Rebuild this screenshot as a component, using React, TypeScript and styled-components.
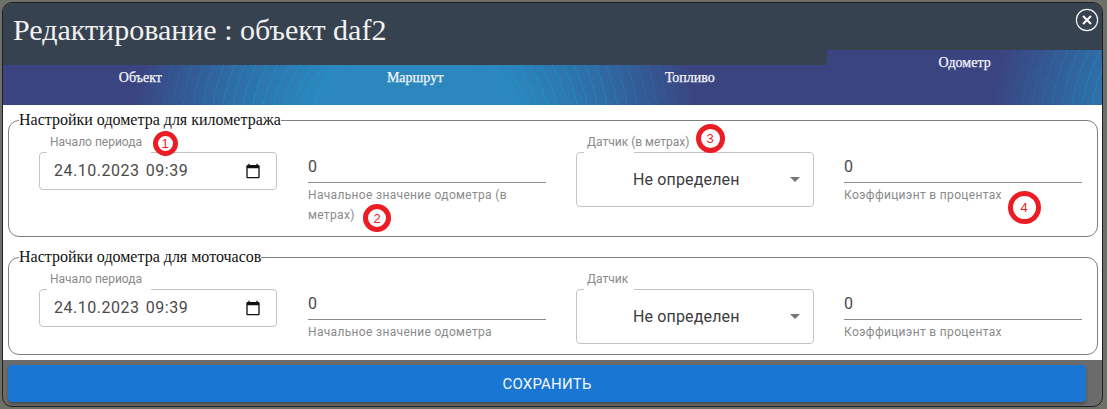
import React from "react";
import styled, { createGlobalStyle } from "styled-components";

const Global = createGlobalStyle`
  html, body { margin: 0; padding: 0; background: #6e6f68; }
  #root { width: 1107px; height: 409px; overflow: hidden; }
`;

const Page = styled.div`
  width: 1107px;
  height: 409px;
  box-sizing: border-box;
  padding: 2px 4px 2px 2px;
`;

const Modal = styled.div`
  position: relative;
  height: 405px;
  box-sizing: border-box;
  border: 1px solid #1f1f1f;
  border-radius: 10px;
  overflow: hidden;
  display: flex;
  flex-direction: column;
  background: #6b6b6b;
`;

const Header = styled.header`
  height: 62px;
  flex: none;
  box-sizing: border-box;
  background: #36424f;
  display: flex;
  justify-content: space-between;
  align-items: flex-start;
  padding: 5px 3px 0 10px;
`;

const Title = styled.h1`
  margin: 1px 0 0;
  font: 400 30px/42px "Liberation Serif", serif;
  color: #f1f1f1;
`;

const Close = styled.button`
  width: 24px;
  height: 24px;
  padding: 0;
  border: 0;
  background: none;
  display: block;
`;

const TabStrip = styled.nav`
  height: 40px;
  flex: none;
  display: flex;
  align-items: flex-end;
`;

const Glow = styled.div<{ $cx: number; $cy: number; $fade: number }>`
  position: relative;
  overflow: hidden;
  background: radial-gradient(
    circle at ${(p) => p.$cx}px ${(p) => p.$cy}px,
    #2b87bd 0,
    #2b87bd 110px,
    #2f6da6 190px,
    #3a4480 ${(p) => p.$fade}px
  );
  &::before {
    content: "";
    position: absolute;
    inset: 0;
    background: repeating-radial-gradient(
      circle at ${(p) => p.$cx}px ${(p) => p.$cy}px,
      transparent 0,
      transparent 8.6px,
      rgba(14, 158, 222, 0.75) 9.2px,
      transparent 9.8px
    );
    -webkit-mask-image: radial-gradient(
      circle at ${(p) => p.$cx}px ${(p) => p.$cy}px,
      transparent 95px,
      #000 105px,
      #000 170px,
      transparent ${(p) => p.$fade}px
    );
    mask-image: radial-gradient(
      circle at ${(p) => p.$cx}px ${(p) => p.$cy}px,
      transparent 95px,
      #000 105px,
      #000 170px,
      transparent ${(p) => p.$fade}px
    );
  }
`;

const IdleTabs = styled(Glow)`
  flex: 3;
  height: 40px;
  display: flex;
`;

const ActiveTab = styled(Glow)`
  flex: 1;
  height: 55px;
`;

const TabLabel = styled.div`
  position: relative;
  flex: 1;
  height: 100%;
  box-sizing: border-box;
  padding-top: 4px;
  text-align: center;
  font: 400 14px/17px "Liberation Serif", serif;
  color: #f4f6fa;
  -webkit-text-stroke: 0.25px #f4f6fa;
`;

const Body = styled.main`
  height: 255px;
  flex: none;
  box-sizing: border-box;
  background: #fff;
  padding: 6px 4px 0 5px;
  display: flex;
  flex-direction: column;
  gap: 11px;
`;

const Section = styled.fieldset`
  margin: 0;
  padding: 0;
  min-width: 0;
  border: 1px solid #808080;
  border-radius: 11px;
`;

const Legend = styled.legend`
  margin-left: 10px;
  padding: 0;
  font: 400 16px/18px "Liberation Serif", serif;
  color: #111;
`;

const Row = styled.div`
  display: grid;
  grid-template-columns: 269px 268px 268px 238px;
  align-items: start;
  padding: 23px 15px 10px 30px;
  & > * {
    width: 238px;
  }
`;

const Outlined = styled.div<{ $tall?: boolean }>`
  position: relative;
  height: ${(p) => (p.$tall ? 55 : 38)}px;
  box-sizing: border-box;
  border: 1px solid #c4c4c4;
  border-radius: 4px;
  display: flex;
  align-items: center;
  font: 400 16px/20px Roboto, sans-serif;
  color: #454545;
`;

const Notch = styled.span<{ $w: number }>`
  position: absolute;
  top: -1px;
  left: 7px;
  width: ${(p) => p.$w}px;
  height: 1px;
  background: #fff;
`;

const FloatLabel = styled.label`
  position: absolute;
  top: -18px;
  left: 10px;
  white-space: nowrap;
  font: 400 12px/14px Roboto, sans-serif;
  color: #8a8a8a;
`;

const DateText = styled.span`
  margin-left: 14px;
  flex: 1;
  letter-spacing: 0.5px;
  word-spacing: 2px;
  color: #4a4a4a;
`;

const CalendarIcon = styled.svg`
  width: 16px;
  height: 16px;
  margin-right: 15px;
  fill: #111;
`;

const SelectText = styled.span`
  flex: 1;
  padding-left: 56px;
  letter-spacing: 0.15px;
  color: #3c3c3c;
`;

const Arrow = styled.span`
  width: 0;
  height: 0;
  margin-right: 13px;
  border-left: 5px solid transparent;
  border-right: 5px solid transparent;
  border-top: 5px solid #757575;
`;

const TextField = styled.div`
  padding: 5px 0 1px;
`;

const Value = styled.div`
  height: 26px;
  box-sizing: border-box;
  border-bottom: 1px solid #8c8c8c;
  font: 400 16px/20px Roboto, sans-serif;
  color: #4a4a4a;
`;

const Helper = styled.div`
  margin-top: 2px;
  font: 400 12px/20px Roboto, sans-serif;
  letter-spacing: 0.33px;
  color: #8a8a8a;
`;

const Footer = styled.footer`
  flex: 1;
  box-sizing: border-box;
  padding: 5px 16px 5px 5px;
  display: flex;
`;

const Save = styled.button`
  flex: 1;
  height: 37px;
  border: 0;
  border-radius: 4px;
  background: #1976d2;
  box-shadow: 0 2px 3px rgba(0, 0, 0, 0.3);
  color: #f4f8fc;
  font: 400 15px/20px Roboto, sans-serif;
  letter-spacing: 0.2px;
  text-transform: uppercase;
`;

const Marker = styled.span<{ $x: number; $y: number; $d: number }>`
  position: absolute;
  left: ${(p) => p.$x - p.$d / 2}px;
  top: ${(p) => p.$y - p.$d / 2}px;
  width: ${(p) => p.$d}px;
  height: ${(p) => p.$d}px;
  box-sizing: border-box;
  border: 5px solid #ec1c24;
  border-radius: 50%;
  background: #fff;
  display: flex;
  align-items: center;
  justify-content: center;
  font: 400 13px/13px "Liberation Sans", sans-serif;
  color: #ed1c24;
`;

const DateField = () => (
  <Outlined>
    <Notch $w={104} />
    <FloatLabel>Начало периода</FloatLabel>
    <DateText>24.10.2023 09:39</DateText>
    <CalendarIcon viewBox="0 0 24 24">
      <path d="M20 3h-1V1h-2v2H7V1H5v2H4c-1.1 0-2 .9-2 2v16c0 1.1.9 2 2 2h16c1.1 0 2-.9 2-2V5c0-1.1-.9-2-2-2zm0 18H4V8h16v13z" />
    </CalendarIcon>
  </Outlined>
);

const SelectField = ({ label }: { label: string }) => (
  <Outlined $tall>
    <Notch $w={50} />
    <FloatLabel>{label}</FloatLabel>
    <SelectText>Не определен</SelectText>
    <Arrow />
  </Outlined>
);

const Input = ({ helper }: { helper: string }) => (
  <TextField>
    <Value>0</Value>
    <Helper>{helper}</Helper>
  </TextField>
);

export default function App() {
  return (
    <Page>
      <Global />
      <Modal>
        <Header>
          <Title>Редактирование : объект daf2</Title>
          <Close aria-label="Закрыть">
            <svg width="24" height="24" viewBox="0 0 24 24" fill="none" stroke="#f4f4f4">
              <circle cx="12" cy="12" r="10.6" strokeWidth="1.2" />
              <path d="M8 8l8 8M16 8l-8 8" strokeWidth="2.2" />
            </svg>
          </Close>
        </Header>
        <TabStrip>
          <IdleTabs $cx={412} $cy={75} $fade={285}>
            <TabLabel>Объект</TabLabel>
            <TabLabel>Маршрут</TabLabel>
            <TabLabel>Топливо</TabLabel>
          </IdleTabs>
          <ActiveTab $cx={447} $cy={90} $fade={285}>
            <TabLabel>Одометр</TabLabel>
          </ActiveTab>
        </TabStrip>
        <Body>
          <Section>
            <Legend>Настройки одометра для километража</Legend>
            <Row>
              <DateField />
              <Input helper="Начальное значение одометра (в метрах)" />
              <SelectField label="Датчик (в метрах)" />
              <Input helper="Коэффициэнт в процентах" />
            </Row>
          </Section>
          <Section>
            <Legend>Настройки одометра для моточасов</Legend>
            <Row>
              <DateField />
              <Input helper="Начальное значение одометра" />
              <SelectField label="Датчик" />
              <Input helper="Коэффициэнт в процентах" />
            </Row>
          </Section>
        </Body>
        <Footer>
          <Save>Сохранить</Save>
        </Footer>
        <Marker $x={162} $y={140} $d={25}>1</Marker>
        <Marker $x={374} $y={215} $d={28}>2</Marker>
        <Marker $x={707} $y={135} $d={29}>3</Marker>
        <Marker $x={1021} $y={204} $d={33}>4</Marker>
      </Modal>
    </Page>
  );
}
